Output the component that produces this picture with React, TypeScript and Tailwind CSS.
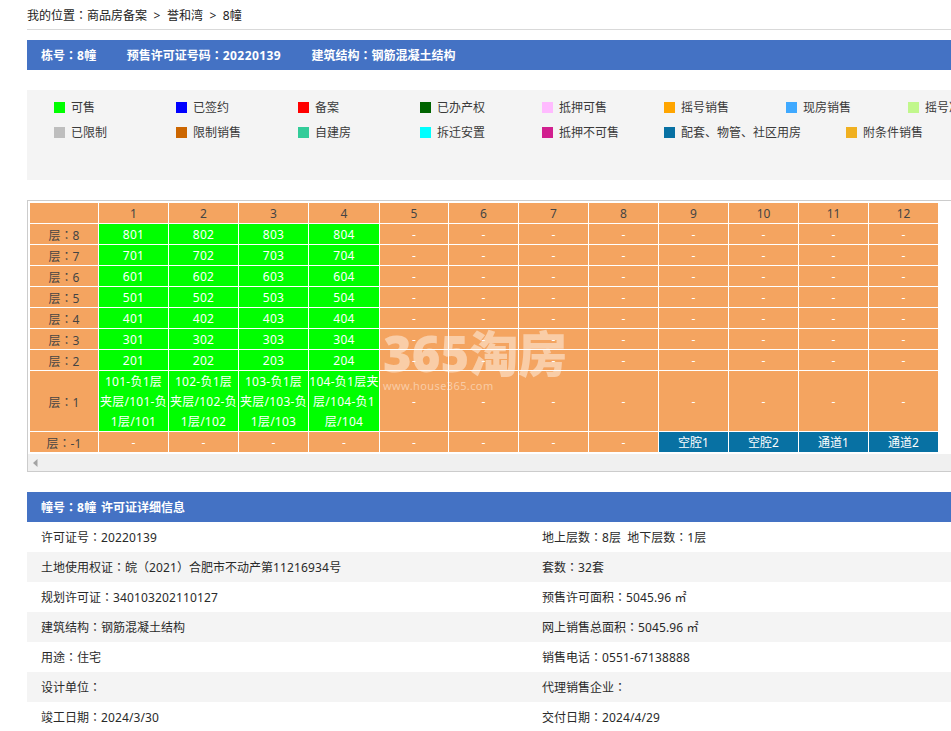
import React from 'react';

const legendRows = [
  [
    ['可售', 'bg-[#00ff00]'],
    ['已签约', 'bg-[#0000ff]'],
    ['备案', 'bg-[#ff0000]'],
    ['已办产权', 'bg-[#006400]'],
    ['抵押可售', 'bg-[#ffbbff]'],
    ['摇号销售', 'bg-[#ffa500]'],
    ['现房销售', 'bg-[#3fa9ff]'],
    ['摇号准售', 'bg-[#c1f78c]'],
  ],
  [
    ['已限制', 'bg-[#bebebe]'],
    ['限制销售', 'bg-[#cc6600]'],
    ['自建房', 'bg-[#33cc99]'],
    ['拆迁安置', 'bg-[#00ffff]'],
    ['抵押不可售', 'bg-[#d11f8f]'],
    ['配套、物管、社区用房', 'bg-[#0871a3]'],
    ['附条件销售', 'bg-[#f0b020]'],
  ],
];

const colWidths = ['w-[68px]', 'w-[69px]', 'w-[69px]', 'w-[69px]', 'w-[70px]', 'w-[68px]', 'w-[69px]', 'w-[69px]', 'w-[69px]', 'w-[69px]', 'w-[69px]', 'w-[69px]', 'w-[69px]'];
const columns = [1, 2, 3, 4, 5, 6, 7, 8, 9, 10, 11, 12];
const floors = [8, 7, 6, 5, 4, 3, 2];

const groundFloor = [
  ['101-负1层', '夹层/101-负', '1层/101'],
  ['102-负1层', '夹层/102-负', '1层/102'],
  ['103-负1层', '夹层/103-负', '1层/103'],
  ['104-负1层夹', '层/104-负1', '层/104'],
];

const basement = ['空腔1', '空腔2', '通道1', '通道2'];

const infoRows = [
  ['许可证号：20220139', '地上层数：8层\u00a0\u00a0地下层数：1层'],
  ['土地使用权证：皖（2021）合肥市不动产第11216934号', '套数：32套'],
  ['规划许可证：340103202110127', '预售许可面积：5045.96 ㎡'],
  ['建筑结构：钢筋混凝土结构', '网上销售总面积：5045.96 ㎡'],
  ['用途：住宅', '销售电话：0551-67138888'],
  ['设计单位：', '代理销售企业：'],
  ['竣工日期：2024/3/30', '交付日期：2024/4/29'],
];

// the colon sits in the middle of its box in the reference, TC font does that.
// digits run a little wider there too, hence the tracking
const T = ({ text, bold }: { text: string; bold?: boolean }) => (
  <>
    {text.split(/(：|\d+)/).map((part, i) => {
      if (part === '：') {
        return <span key={i} className="font-['Noto_Sans_CJK_TC',sans-serif]">：</span>;
      }
      if (/^\d+$/.test(part)) {
        return <span key={i} className={bold ? 'tracking-[0.4px]' : 'tracking-[0.14px]'}>{part}</span>;
      }
      return part;
    })}
  </>
);

const Orange = ({ children }: { children?: React.ReactNode }) => (
  <td className="h-5 bg-[#f4a460] p-0 pt-[2px] text-center leading-4 text-[#444]">{children}</td>
);

const Dash = () => <td className="bg-[#f4a460] p-0 pt-[2px] text-center leading-4 text-white">-</td>;

const App = () => {
  return (
    <div className="w-[951px] h-[731px] overflow-hidden bg-white font-['Noto_Sans','Noto_Sans_CJK_SC',sans-serif] text-xs">
      <div className="ml-[27px] w-[1002px]">
        <div className="h-[30px] border-b border-[#d9d9d9] leading-[29px] text-[#222]">
          <T text="我的位置：商品房备案" />
          <span className="mx-[6.5px]">&gt;</span>誉和湾<span className="mx-[6.5px]">&gt;</span>8幢
        </div>

        <div className="mt-[10px] flex h-[30px] items-center gap-[30.5px] bg-[#4472c4] pl-[14px] pt-px font-bold text-white">
          <span><T bold text="栋号：8幢" /></span>
          <span><T bold text="预售许可证号码：20220139" /></span>
          <span><T bold text="建筑结构：钢筋混凝土结构" /></span>
        </div>

        <div className="mt-5 h-[90px] bg-[#f4f4f4] pl-[27px] pt-[5px] text-[#3a3a3a]">
          {legendRows.map((row, r) => (
            <div key={r} className="flex h-[25px] items-center">
              {row.map(([label, color]) => (
                <div key={label} className={`flex shrink-0 items-center gap-[6px] ${label.length > 8 ? 'w-[182px]' : 'w-[122px]'}`}>
                  <span className={`h-[11px] w-[11px] ${color}`} />
                  <span className="whitespace-nowrap">{label}</span>
                </div>
              ))}
            </div>
          ))}
        </div>

        <div className="relative mt-5 h-[272px] border border-[#cccccc] pl-px pt-px">
          <table className="w-[910px] table-fixed border-separate border-spacing-px">
            <colgroup>
              {colWidths.map((w, i) => (
                <col key={i} className={w} />
              ))}
            </colgroup>
            <tbody>
              <tr>
                <Orange />
                {columns.map((c) => (
                  <Orange key={c}>{c}</Orange>
                ))}
              </tr>
              {floors.map((f) => (
                <tr key={f}>
                  <Orange><T text={`层：${f}`} /></Orange>
                  {columns.map((c) =>
                    c <= 4 ? (
                      <td key={c} className="bg-[#00ff00] p-0 pt-[2px] text-center leading-4 tracking-[0.25px] text-white">{f * 100 + c}</td>
                    ) : (
                      <Dash key={c} />
                    ),
                  )}
                </tr>
              ))}
              <tr>
                <Orange><T text="层：1" /></Orange>
                {columns.map((c) =>
                  c <= 4 ? (
                    <td key={c} className="h-[60px] whitespace-nowrap bg-[#00ff00] p-0 text-center leading-5 tracking-[0.25px] text-white">
                      <div className="translate-y-px">
                        {groundFloor[c - 1].map((line) => (
                          <div key={line}>{line}</div>
                        ))}
                      </div>
                    </td>
                  ) : (
                    <Dash key={c} />
                  ),
                )}
              </tr>
              <tr>
                <Orange><T text="层：-1" /></Orange>
                {columns.map((c) =>
                  c <= 8 ? (
                    <Dash key={c} />
                  ) : (
                    <td key={c} className="bg-[#0871a3] p-0 pt-[2px] text-center leading-4 text-white">{basement[c - 9]}</td>
                  ),
                )}
              </tr>
            </tbody>
          </table>

          <div className="absolute bottom-0 left-0 right-0 flex h-[17px] items-center bg-[#f0f0f0] pl-[5px]">
            <svg width="5" height="8" viewBox="0 0 5 8">
              <path d="M4.5 0 L0 4 L4.5 8 Z" fill="#a3a3a3" />
            </svg>
          </div>

          <div className="pointer-events-none absolute left-[355px] top-[131px] text-white/45">
            <div className="flex h-[42px] items-center whitespace-nowrap text-[49px] font-black leading-none">
              365淘房
            </div>
            <div className="mt-[6px] text-[11px] leading-[11px] tracking-[0.4px]">www.house365.com</div>
          </div>
        </div>

        <div className="mt-5 flex h-[30px] items-center bg-[#4472c4] pl-[14px] pt-px font-bold text-white [word-spacing:1.5px]">
          <span><T bold text="幢号：8幢 许可证详细信息" /></span>
        </div>
        {infoRows.map(([left, right], i) => (
          <div key={left} className={`grid h-[30px] grid-cols-2 items-center text-[#2a2a2a] ${i % 2 === 1 ? 'bg-[#f4f4f4]' : 'bg-white'}`}>
            <div className="pl-[14px]"><T text={left} /></div>
            <div className="pl-[14px]"><T text={right} /></div>
          </div>
        ))}
      </div>
    </div>
  );
};

export default App;
